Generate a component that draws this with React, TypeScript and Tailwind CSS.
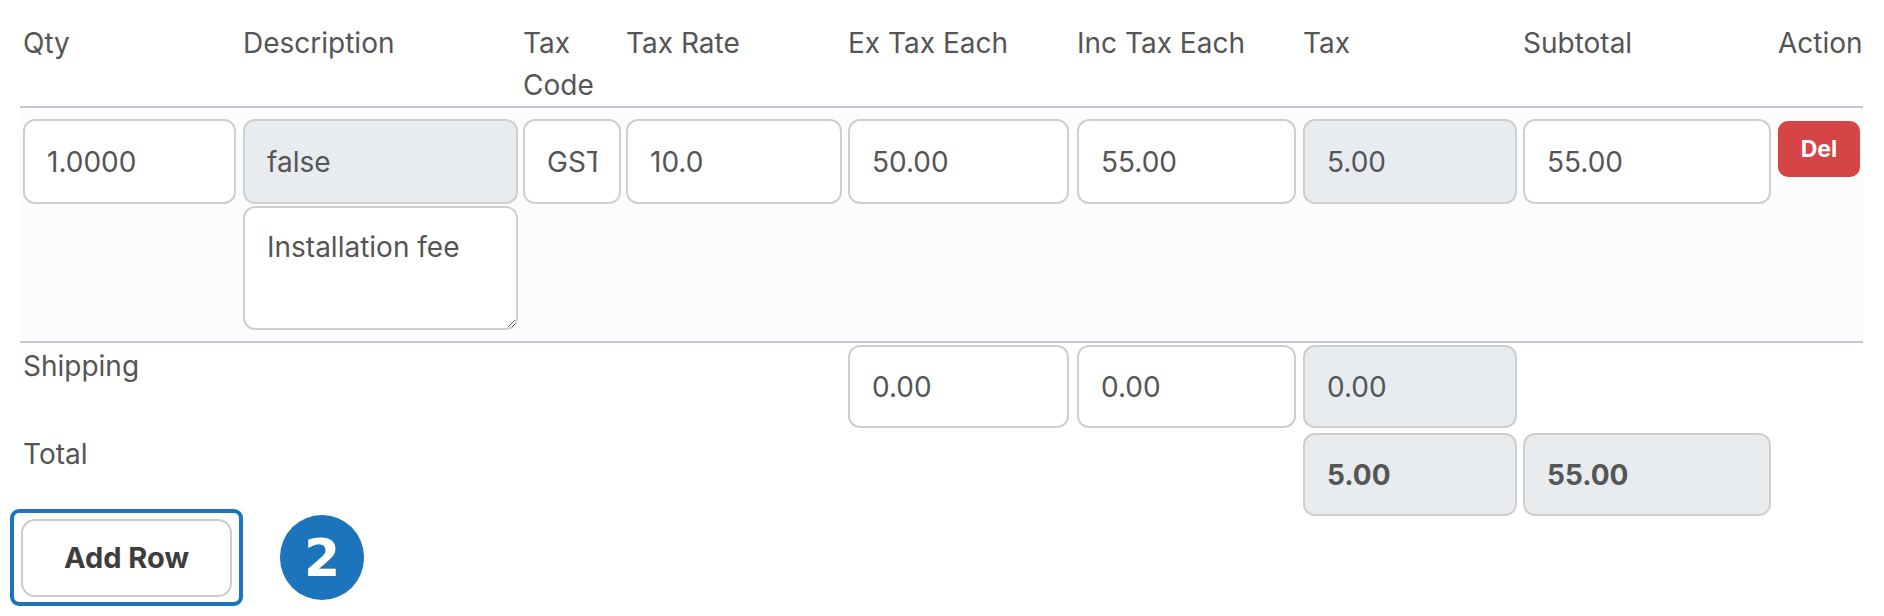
import clsx from "clsx";

const grid =
  "grid grid-cols-[220px_280px_103px_222px_229px_226px_220px_255px_85px] pl-[3px]";

type FieldProps = {
  value: string;
  w: string;
  readOnly?: boolean;
  bold?: boolean;
  h?: string;
};

function Field({ value, w, readOnly, bold, h = "h-[85px]" }: FieldProps) {
  return (
    <input
      readOnly
      value={value}
      className={clsx(
        "block rounded-[12px] border-2 border-[#cfcfcf] px-[22px] text-[28px] text-[#555] outline-none",
        readOnly ? "bg-[#e9ecef]" : "bg-white",
        bold && "font-bold",
        w,
        h
      )}
    />
  );
}

const headers = [
  "Qty",
  "Description",
  "Tax Code",
  "Tax Rate",
  "Ex Tax Each",
  "Inc Tax Each",
  "Tax",
  "Subtotal",
  "Action",
];

export default function App() {
  return (
    <div className="w-[1884px] h-[616px] overflow-hidden bg-white font-['Inter','Noto_Sans',sans-serif] text-[28px] text-[#555]">
      {/* TABLE */}
      <div className="ml-[20px] w-[1843px]">
        {/* HEADER */}
        <div className={clsx(grid, "pt-[22px] leading-[42px] border-b-2 border-[#c5c7d6]")}>
          {headers.map((h) => (
            <div key={h} className={h === "Tax Code" ? "w-[80px]" : ""}>
              {h}
            </div>
          ))}
        </div>

        {/* LINE ITEM */}
        <div className={clsx(grid, "items-start bg-[#fcfcfc] pt-[11px] pb-[11px] border-b-2 border-[#c5c7d6]")}>
          <Field value="1.0000" w="w-[213px]" />
          <div className="flex flex-col">
            <Field value="false" w="w-[275px]" readOnly />
            <textarea
              readOnly
              value="Installation fee"
              className="mt-[2px] block w-[275px] h-[124px] rounded-[12px] border-2 border-[#cfcfcf] bg-white px-[22px] pt-[18px] leading-[42px] text-[28px] text-[#555] outline-none"
            />
          </div>
          <Field value="GST" w="w-[98px]" />
          <Field value="10.0" w="w-[216px]" />
          <Field value="50.00" w="w-[221px]" />
          <Field value="55.00" w="w-[219px]" />
          <Field value="5.00" w="w-[214px]" readOnly />
          <Field value="55.00" w="w-[248px]" />
          <button className="mt-[2px] w-[82px] h-[56px] rounded-[10px] bg-[#d64545] text-[23px] font-bold text-white">
            Del
          </button>
        </div>

        {/* SHIPPING */}
        <div className={clsx(grid, "items-start pt-[2px] pb-[2px]")}>
          <div className="col-span-4 leading-[42px]">Shipping</div>
          <Field value="0.00" w="w-[221px]" h="h-[83px]" />
          <Field value="0.00" w="w-[219px]" h="h-[83px]" />
          <Field value="0.00" w="w-[214px]" h="h-[83px]" readOnly />
        </div>

        {/* TOTAL */}
        <div className={clsx(grid, "items-start pt-[3px] pb-[2px]")}>
          <div className="col-span-6 leading-[42px]">Total</div>
          <Field value="5.00" w="w-[214px]" h="h-[83px]" readOnly bold />
          <Field value="55.00" w="w-[248px]" h="h-[83px]" readOnly bold />
        </div>
      </div>

      {/* ADD ROW + STEP BADGE */}
      <div className="-mt-[3px] flex items-center">
        <button className="relative ml-[21px] w-[211px] h-[78px] rounded-[14px] border-2 border-[#cccccc] bg-white text-[29px] font-bold text-[#3d3d3d]">
          Add Row
          <span className="pointer-events-none absolute -left-[13px] -right-[13px] -top-[12px] -bottom-[11px] rounded-[9px] border-4 border-[#1c75bc]" />
        </button>
        <div className="ml-[48px] flex w-[84px] h-[85px] items-center justify-center rounded-full bg-[#1c75bc] font-['DejaVu_Sans',sans-serif] text-[52px] font-bold leading-none text-white">
          2
        </div>
      </div>
    </div>
  );
}
